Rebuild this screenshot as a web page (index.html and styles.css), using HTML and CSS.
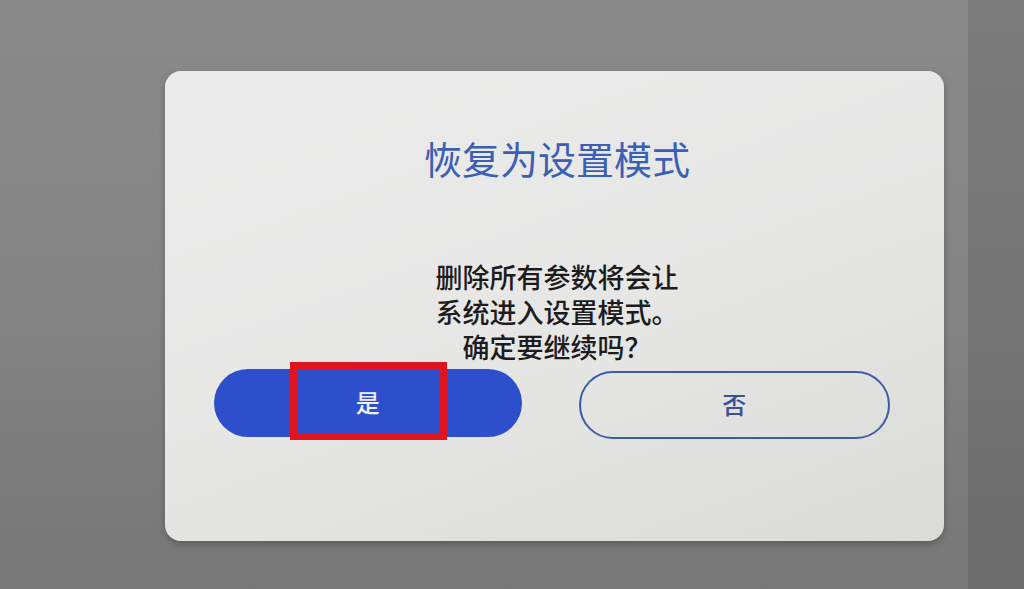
FILE: index.html
```html
<!DOCTYPE html>
<html lang="zh-CN">
<head>
<meta charset="utf-8">
<link rel="stylesheet" href="styles.css">
</head>
<body>
<div class="screen">
  <div class="stage">
    <div class="card">
      <h1 class="title">恢复为设置模式</h1>
      <div class="message">
        <div>删除所有参数将会让</div>
        <div>系统进入设置模式。</div>
        <div>确定要继续吗？</div>
      </div>
      <div class="actions">
        <div class="btn btn-yes">是<span class="mark"></span></div>
        <div class="btn btn-no">否</div>
      </div>
    </div>
  </div>
  <div class="band"></div>
</div>
</body>
</html>
```

FILE: styles.css
```css
html, body {
  margin: 0;
  padding: 0;
}
body {
  width: 1024px;
  height: 589px;
  overflow: hidden;
  font-family: "Noto Sans CJK SC", "Noto Sans", sans-serif;
}
.screen {
  display: flex;
  width: 1024px;
  height: 589px;
}
.stage {
  width: 968px;
  height: 589px;
  background: linear-gradient(180deg, #8a8a8a 0%, #848484 50%, #777777 100%);
  padding: 71px 0 0 165px;
  box-sizing: border-box;
}
.band {
  flex: 1;
  background: linear-gradient(180deg, #7c7c7c 0%, #737373 60%, #6c6c6c 100%);
}
.card {
  width: 779px;
  height: 470px;
  box-sizing: border-box;
  border-radius: 16px;
  background: linear-gradient(160deg, #ececec 0%, #e6e6e5 55%, #dadad7 100%);
  box-shadow: 0 3px 6px rgba(40, 40, 40, 0.35);
  padding: 64px 54px 0 49px;
  display: flex;
  flex-direction: column;
  align-items: center;
}
.title {
  margin: 0 0 0 10px;
  font-size: 38px;
  line-height: 46px;
  font-weight: 400;
  color: #3b5fb4;
}
.message {
  margin: 78px 0 0 10px;
  font-size: 27px;
  line-height: 35px;
  font-weight: 500;
  color: #1c1c1c;
  text-align: center;
}
.actions {
  margin-top: 5px;
  align-self: stretch;
  display: flex;
  gap: 57px;
}
.btn {
  position: relative;
  flex: 1;
  height: 68px;
  border-radius: 34px;
  box-sizing: border-box;
  display: flex;
  align-items: center;
  justify-content: center;
  font-size: 24px;
  font-weight: 500;
  padding-bottom: 4px;
}
.btn-yes {
  background: #2d4fcb;
  color: #eef0fa;
}
.btn-no {
  margin-top: 2px;
  border: 2px solid #3d5ca6;
  color: #3a4f94;
  background: transparent;
}
.mark {
  position: absolute;
  left: 76px;
  top: -7px;
  width: 157px;
  height: 78px;
  box-sizing: border-box;
  border: 7px solid #e0141e;
}
```
